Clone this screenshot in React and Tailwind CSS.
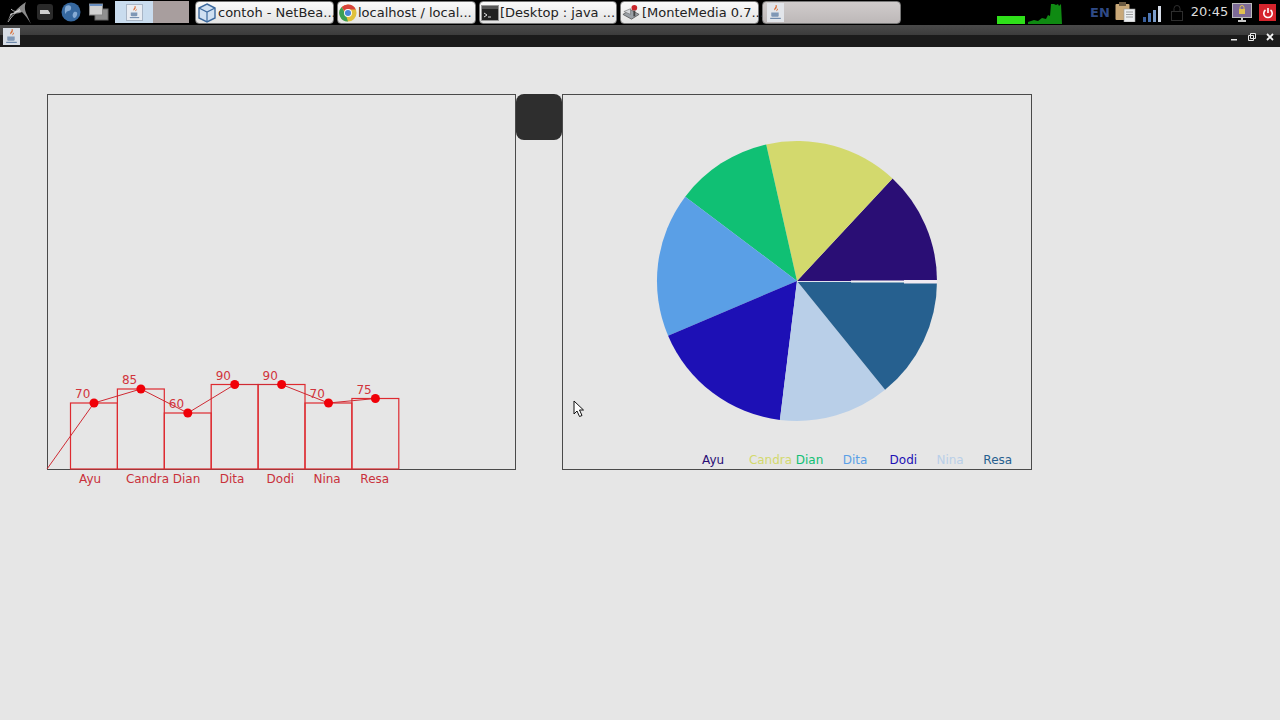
import React from "react";

const names = ["Ayu", "Candra", "Dian", "Dita", "Dodi", "Nina", "Resa"];
const values = [70, 85, 60, 90, 90, 70, 75];
const tops = [403, 389, 413, 384.5, 384.5, 403, 398.5];
const legendColors = ["#2a0e75", "#d3d96d", "#10c074", "#5a9fe6", "#1d10b5", "#b9cfe8", "#26608f"];

const slices = [
  [0, 47, "#2a0e75"],
  [47, 102.7, "#d3d96d"],
  [102.7, 143, "#10c074"],
  [143, 203, "#5a9fe6"],
  [203, 263, "#1d10b5"],
  [263, 309, "#b9cfe8"],
  [309, 360, "#26608f"],
];

function slicePath(a, b) {
  const r = 140;
  const cx = 797;
  const cy = 281;
  const p = (d) => `${(cx + r * Math.cos((d * Math.PI) / 180)).toFixed(1)} ${(cy - r * Math.sin((d * Math.PI) / 180)).toFixed(1)}`;
  return `M${cx} ${cy} L${p(a)} A${r} ${r} 0 0 0 ${p(b)} Z`;
}

function JavaIcon({ className }) {
  return (
    <svg viewBox="0 0 16 16" className={className}>
      <path d="M8 1c1 2-2 3-1 5 1-1 3-2 2-5z" fill="#d9703a" />
      <path d="M10 4c0 1-2 2-1 3 0-1 2-1 1-3z" fill="#d9703a" />
      <path d="M4 8h7v3c0 1-1 1-2 1H6c-1 0-2 0-2-1z" fill="#7f97b5" />
      <path d="M3 13h10v1H3z" fill="#5f7da3" />
    </svg>
  );
}

function NetbeansIcon() {
  return (
    <svg viewBox="0 0 20 20" className="w-5 h-5 shrink-0">
      <path d="M10 1l8 4v10l-8 4-8-4V5z" fill="#cfe0f2" stroke="#3d6a9e" strokeWidth="1.4" />
      <path d="M2 5l8 4 8-4M10 9v10" fill="none" stroke="#3d6a9e" strokeWidth="1.2" />
    </svg>
  );
}

function ChromeIcon() {
  return (
    <svg viewBox="0 0 20 20" className="w-[18px] h-[18px] shrink-0">
      <circle cx="10" cy="10" r="9.5" fill="#e0c13c" />
      <path d="M10 .5A9.5 9.5 0 0 1 18.7 6H10A4 4 0 0 0 6.4 8.2L3 3.4A9.5 9.5 0 0 1 10 .5z" fill="#d8433a" />
      <path d="M3 3.4l4.4 8L10 19.5A9.5 9.5 0 0 1 3 3.4z" fill="#3c9f55" />
      <circle cx="10" cy="10" r="4.4" fill="#fff" />
      <circle cx="10" cy="10" r="3.4" fill="#4a86d8" />
    </svg>
  );
}

function TerminalIcon() {
  return (
    <svg viewBox="0 0 18 16" className="w-[18px] h-4 shrink-0">
      <rect x="0.5" y="0.5" width="17" height="15" fill="#222" stroke="#999" />
      <rect x="1" y="1" width="16" height="3" fill="#555" />
      <path d="M3 8l3 2-3 2M7 12h3" fill="none" stroke="#ddd" strokeWidth="1" />
    </svg>
  );
}

function MediaIcon() {
  return (
    <svg viewBox="0 0 20 20" className="w-[19px] h-[19px] shrink-0">
      <path d="M1 12l8-5 9 5-8 5z" fill="#9aa0a6" stroke="#555" strokeWidth="0.8" />
      <path d="M2 9l7-3v6z" fill="#d5d8dc" stroke="#666" strokeWidth="0.6" />
      <circle cx="13" cy="5" r="3" fill="#c9262b" />
      <path d="M12 8h2v6h-2z" fill="#444" />
    </svg>
  );
}

function ArchLogo() {
  return (
    <svg viewBox="0 0 26 24" className="w-[26px] h-6">
      <path d="M1 23C6 14 13 6 21 1 19 6 20 10 22 14L26 23C23 18 20 14 17 11 13 13 9 13 6 12 4 16 3 20 1 23z" fill="#8a8a8a" />
      <path d="M3 21C7 15 10 12 15 8M6 8c3 3 6 3 10 2M5 14l10-5" stroke="#d8d8d8" strokeWidth="0.8" fill="none" />
    </svg>
  );
}

function TaskButton({ width, icon, text }) {
  return (
    <div className={`${width} h-[23px] flex items-center gap-px pl-px rounded-[4px] border border-[#777] bg-gradient-to-b from-[#fafafa] to-[#e4e4e4] text-[13px] text-[#222] whitespace-nowrap`}>
      {icon}
      <span>{text}</span>
    </div>
  );
}

function TopBar() {
  return (
    <div className="h-[25px] bg-black flex items-start pl-[5px] pt-px">
      <ArchLogo />
      <svg viewBox="0 0 16 16" className="w-4 h-4 ml-[6px] mt-[3px]">
        <rect width="16" height="16" rx="3" fill="#2a2a2a" />
        <path d="M3 6h8l2 3v1H3z" fill="#cfcfcf" />
      </svg>
      <svg viewBox="0 0 20 20" className="w-5 h-5 ml-[8px] mt-px">
        <circle cx="10" cy="10" r="9.5" fill="#36689f" />
        <path d="M5 4c3-2 6 0 5 3s-4 1-5 4-2-5 0-7zM13 10c2-1 4 0 3 3s-3 4-4 2 0-4 1-5z" fill="#86abd4" />
      </svg>
      <svg viewBox="0 0 20 18" className="w-5 h-[18px] ml-[8px] mt-[2px]">
        <rect x="6" y="6" width="13" height="11" fill="#8f8f8f" stroke="#666" />
        <rect x="0.5" y="1" width="13" height="11" fill="#d0d0d0" stroke="#888" />
        <rect x="0.5" y="1" width="13" height="2" fill="#6a8fc0" />
      </svg>
      <div className="w-[38px] h-[22px] ml-[6px] bg-[#c9dcee] flex items-center justify-center">
        <div className="w-[17px] h-[17px] bg-[#e8ecf2] border border-[#a9b6c6]">
          <JavaIcon className="w-full h-full" />
        </div>
      </div>
      <div className="w-[36px] h-[22px] bg-[#a89e9e]" />
      <div className="flex gap-[3px] ml-[6px]">
        <TaskButton width="w-[139px]" icon={<NetbeansIcon />} text="contoh - NetBea..." />
        <TaskButton width="w-[139px]" icon={<ChromeIcon />} text="localhost / local..." />
        <TaskButton width="w-[138px]" icon={<TerminalIcon />} text="[Desktop : java ..." />
        <TaskButton width="w-[139px]" icon={<MediaIcon />} text="[MonteMedia 0.7..." />
        <div className="w-[139px] h-[23px] flex items-center pl-1 rounded-[4px] border border-[#777] bg-gradient-to-b from-[#d0cccc] to-[#bdb8b8]">
          <div className="w-[17px] h-[19px] bg-[#e2e5ea]">
            <JavaIcon className="w-full h-full" />
          </div>
        </div>
      </div>
      <div className="w-[28px] h-[8px] ml-[96px] mt-[15px] bg-[#2fe01a]" />
      <svg viewBox="0 0 34 22" className="w-[34px] h-[22px] ml-[3px] mt-px">
        <path d="M0 22V20L6 18 10 19 14 16 18 17 20 13 22 14 23 2H26L28 3 30 2 31 4 33 2 34 22z" fill="#0f8a12" />
      </svg>
      <span className="ml-[28px] mt-[3px] font-['DejaVu_Sans',sans-serif] font-bold text-[13px] leading-[18px] text-[#2f4a86]">EN</span>
      <svg viewBox="0 0 21 20" className="w-[21px] h-5 ml-[5px] mt-px">
        <rect x="0.5" y="2" width="14" height="16" rx="1" fill="#c9a878" />
        <rect x="4" y="0" width="7" height="4" fill="#6b5a42" />
        <rect x="9" y="7" width="11" height="13" fill="#eceef0" stroke="#999" strokeWidth="0.6" />
        <path d="M11 10h7M11 12.5h7M11 15h7" stroke="#888" strokeWidth="0.8" />
      </svg>
      <svg viewBox="0 0 18 16" className="w-[18px] h-4 ml-[7px] mt-[5px]">
        <rect x="0" y="11" width="3" height="5" fill="#3a5f9c" />
        <rect x="5" y="7" width="3" height="9" fill="#4f78b5" />
        <rect x="10" y="4" width="3" height="12" fill="#7d9ecb" />
        <rect x="15" y="0" width="3" height="16" fill="#d6dde8" />
      </svg>
      <svg viewBox="0 0 12 16" className="w-3 h-4 ml-[10px] mt-[4px]">
        <rect x="0.5" y="6.5" width="11" height="9" fill="none" stroke="#2e2e2e" />
        <path d="M3 6.5V3.5a3 3 0 0 1 6 0v3" fill="none" stroke="#2e2e2e" />
      </svg>
      <span className="ml-[8px] mt-[2px] font-['DejaVu_Sans',sans-serif] text-[13px] leading-[18px] text-[#dcdcdc]">20:45</span>
      <svg viewBox="0 0 20 20" className="w-5 h-5 ml-[4px] mt-[2px]">
        <rect x="0.5" y="0.5" width="19" height="14" fill="#7d6a96" stroke="#bbb" />
        <rect x="7" y="6" width="6" height="5" fill="#e0c050" />
        <path d="M8 6V4.5a2 2 0 0 1 4 0V6" fill="none" stroke="#e0c050" />
        <path d="M9 15h2v2H9zM6 17h8v2H6z" fill="#c9c9c9" />
      </svg>
      <div className="w-[17px] h-[17px] ml-[7px] mt-[3px] bg-[#d5242c] flex items-center justify-center">
        <svg viewBox="0 0 12 12" className="w-3 h-3">
          <path d="M3.5 3a4.2 4.2 0 1 0 5 0" fill="none" stroke="#fff" strokeWidth="1.6" />
          <path d="M6 1v5" stroke="#fff" strokeWidth="1.6" />
        </svg>
      </div>
    </div>
  );
}

function TitleBar() {
  return (
    <div className="h-[22px] flex flex-col relative">
      <div className="h-[10px] bg-gradient-to-b from-[#4a4a4a] to-[#3c3c3c]" />
      <div className="h-[12px] bg-[#1b1b1b]" />
      <div className="absolute inset-0 flex items-center pl-[3px]">
        <div className="w-[17px] h-[17px] bg-[#d7dde5]">
          <JavaIcon className="w-full h-full" />
        </div>
        <div className="ml-auto flex items-center gap-[10px] pr-[6px] pt-[2px]">
          <svg viewBox="0 0 8 8" className="w-2 h-2">
            <path d="M1 6h6v1.5H1z" fill="#e8e8e8" />
          </svg>
          <svg viewBox="0 0 8 8" className="w-2 h-2">
            <path d="M2.5 .5h5v5h-5zM.5 2.5h5v5h-5z" fill="#1b1b1b" stroke="#e8e8e8" />
          </svg>
          <svg viewBox="0 0 8 8" className="w-2 h-2">
            <path d="M1 1l6 6M7 1l-6 6" stroke="#f4f4f4" strokeWidth="1.8" />
          </svg>
        </div>
      </div>
    </div>
  );
}

function BarChart() {
  const line = [[47, 469]].concat(tops.map((t, i) => [94 + i * 46.9, t]));
  return (
    <svg viewBox="48 95 467 374" className="absolute left-0 top-0 w-[467px] h-[374px] overflow-visible">
      {tops.map((t, i) => (
        <rect key={names[i]} x={70.5 + i * 46.9} y={t} width={46.9} height={469 - t} fill="none" stroke="#de2a30" strokeWidth="1.2" />
      ))}
      <polyline points={line.map((p) => p.join(",")).join(" ")} fill="none" stroke="#cf2a33" strokeWidth="1" />
      {line.slice(1).map((p, i) => (
        <circle key={names[i]} cx={p[0]} cy={p[1]} r="4.5" fill="#f00008" />
      ))}
      {tops.map((t, i) => (
        <text key={names[i]} x={75 + i * 46.9} y={t - 5} fontSize="12" fill="#d1343c" fontFamily="DejaVu Sans">
          {values[i]}
        </text>
      ))}
    </svg>
  );
}

function PieChart() {
  return (
    <svg viewBox="563 95 468 374" className="absolute left-0 top-0 w-[468px] h-[374px]">
      {slices.map(([a, b, c]) => (
        <path key={c} d={slicePath(a, b)} fill={c} />
      ))}
      <rect x="797" y="281" width="54" height="1" fill="#dfe3ee" />
      <rect x="851" y="280.5" width="53" height="2" fill="#f2f2f2" />
      <rect x="904" y="280" width="33" height="3.5" fill="#f0eaf2" />
    </svg>
  );
}

export default function App() {
  return (
    <div className="w-[1280px] h-[720px] overflow-hidden bg-[#e6e6e6] font-['DejaVu_Sans',sans-serif]">
      <TopBar />
      <TitleBar />
      <div className="relative flex items-start pt-[47px] pl-[47px]">
        <div className="flex flex-col">
          <div className="relative w-[469px] h-[376px] border border-[#4a4a4a]">
            <BarChart />
          </div>
          <div className="flex pl-[32px] pt-[2px] text-[12px] leading-[14px] text-[#c9313b]">
            {names.map((n) => (
              <span key={n} className="w-[46.9px] whitespace-nowrap">{n}</span>
            ))}
          </div>
        </div>
        <div className="w-[46px] h-[46px] bg-[#2e2e2e] rounded-lg" />
        <div className="relative w-[470px] h-[376px] border border-[#4a4a4a]">
          <PieChart />
          <div className="absolute bottom-[2px] left-[139px] flex text-[12px] leading-[14px]">
            {names.map((n, i) => (
              <span key={n} className="w-[46.9px] whitespace-nowrap" style={{ color: legendColors[i] }}>{n}</span>
            ))}
          </div>
        </div>
        <svg viewBox="0 0 12 18" className="absolute left-[573px] top-[353px] w-3 h-[18px]">
          <path d="M1 1v13l3-3 2.5 5.5 2.5-1-2.5-5.5h4z" fill="#fff" stroke="#111" strokeWidth="1" />
        </svg>
      </div>
    </div>
  );
}
